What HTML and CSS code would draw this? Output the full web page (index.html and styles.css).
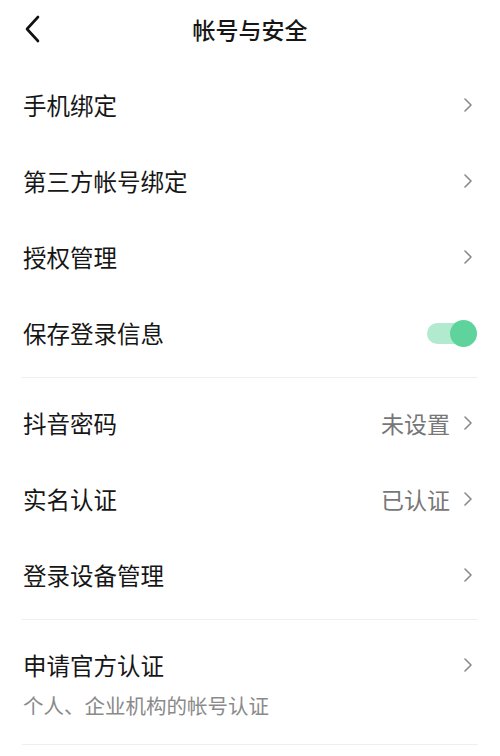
FILE: index.html
```html
<!DOCTYPE html>
<html lang="zh-CN">
<head>
    <meta charset="UTF-8">
    <meta name="viewport" content="width=device-width, initial-scale=1.0">
    <title>帐号与安全</title>
    <link rel="stylesheet" href="styles.css">
</head>
<body>
<div class="header">
    <svg class="back" width="16" height="28" viewBox="0 0 16 28">
        <path d="M14 2 L3 14 L14 26" fill="none" stroke="#111" stroke-width="2.6" stroke-linecap="round" stroke-linejoin="round"/>
    </svg>
    <div class="title">帐号与安全</div>
</div>

<div class="section">
    <div class="row">
        <span class="label">手机绑定</span>
        <svg class="arrow" width="8" height="14" viewBox="0 0 8 14"><path d="M1 1 L7 7 L1 13" fill="none" stroke="#8a8a8a" stroke-width="1.6" stroke-linecap="round" stroke-linejoin="round"/></svg>
    </div>
    <div class="row">
        <span class="label">第三方帐号绑定</span>
        <svg class="arrow" width="8" height="14" viewBox="0 0 8 14"><path d="M1 1 L7 7 L1 13" fill="none" stroke="#8a8a8a" stroke-width="1.6" stroke-linecap="round" stroke-linejoin="round"/></svg>
    </div>
    <div class="row">
        <span class="label">授权管理</span>
        <svg class="arrow" width="8" height="14" viewBox="0 0 8 14"><path d="M1 1 L7 7 L1 13" fill="none" stroke="#8a8a8a" stroke-width="1.6" stroke-linecap="round" stroke-linejoin="round"/></svg>
    </div>
    <div class="row">
        <span class="label">保存登录信息</span>
        <div class="switch"><div class="knob"></div></div>
    </div>
</div>
<div class="divider"></div>

<div class="section">
    <div class="row">
        <span class="label">抖音密码</span>
        <span class="value">未设置</span>
        <svg class="arrow" width="8" height="14" viewBox="0 0 8 14"><path d="M1 1 L7 7 L1 13" fill="none" stroke="#8a8a8a" stroke-width="1.6" stroke-linecap="round" stroke-linejoin="round"/></svg>
    </div>
    <div class="row">
        <span class="label">实名认证</span>
        <span class="value">已认证</span>
        <svg class="arrow" width="8" height="14" viewBox="0 0 8 14"><path d="M1 1 L7 7 L1 13" fill="none" stroke="#8a8a8a" stroke-width="1.6" stroke-linecap="round" stroke-linejoin="round"/></svg>
    </div>
    <div class="row">
        <span class="label">登录设备管理</span>
        <svg class="arrow" width="8" height="14" viewBox="0 0 8 14"><path d="M1 1 L7 7 L1 13" fill="none" stroke="#8a8a8a" stroke-width="1.6" stroke-linecap="round" stroke-linejoin="round"/></svg>
    </div>
</div>
<div class="divider"></div>

<div class="section">
    <div class="row tall">
        <div class="text">
            <div class="label">申请官方认证</div>
            <div class="sub">个人、企业机构的帐号认证</div>
        </div>
        <div class="arrow-box">
            <svg class="arrow" width="8" height="14" viewBox="0 0 8 14"><path d="M1 1 L7 7 L1 13" fill="none" stroke="#8a8a8a" stroke-width="1.6" stroke-linecap="round" stroke-linejoin="round"/></svg>
        </div>
    </div>
</div>
<div class="divider"></div>
</body>
</html>
```

FILE: styles.css
```css
body {
    margin: 0;
    background: #fff;
    font-family: "Noto Sans CJK SC", "Noto Sans", sans-serif;
    color: #161616;
}
.header {
    height: 60px;
    display: flex;
    align-items: center;
    justify-content: center;
    position: relative;
}
.header .back {
    position: absolute;
    left: 24px;
    top: 15px;
}
.header .title {
    font-size: 23px;
    font-weight: 500;
    margin-top: -2px;
}
.section {
    padding: 7px 0 6px;
}
.row {
    height: 76px;
    display: flex;
    align-items: center;
    padding: 0 28px 0 23px;
}
.label {
    flex: 1;
    font-size: 23.5px;
    line-height: 38px;
}
.value {
    font-size: 23px;
    color: #777;
    margin-right: 14px;
}
.arrow {
    display: block;
}
.switch {
    width: 50px;
    height: 27px;
    position: relative;
    margin-right: -5px;
}
.switch::before {
    content: "";
    position: absolute;
    left: 0;
    top: 3px;
    width: 43px;
    height: 21px;
    border-radius: 11px;
    background: #b2ead0;
}
.knob {
    position: absolute;
    right: 0;
    top: 0;
    width: 27px;
    height: 27px;
    border-radius: 50%;
    background: #5ed49c;
}
.row.tall {
    height: auto;
    align-items: flex-start;
    padding-top: 19px;
    padding-bottom: 19px;
}
.text {
    flex: 1;
}
.sub {
    font-size: 20.5px;
    line-height: 28px;
    margin-top: 7px;
    color: #8a8a8a;
}
.arrow-box {
    height: 38px;
    display: flex;
    align-items: center;
}
.divider {
    height: 1px;
    margin: 0 22px;
    background: #efefef;
}
```
